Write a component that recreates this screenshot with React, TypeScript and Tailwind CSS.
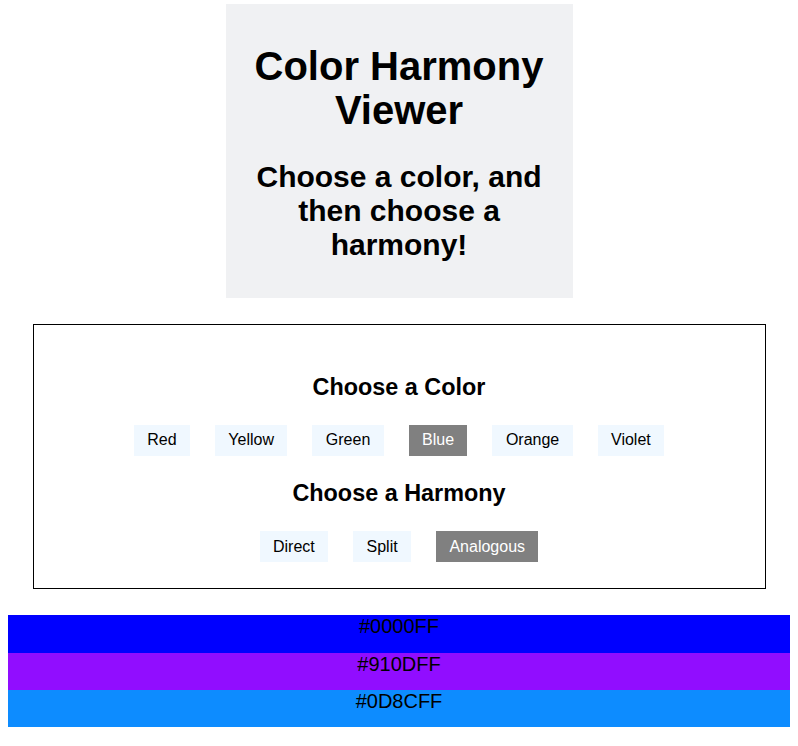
import { useState } from "react";

// ─── Constants ────────────────────────────────────────────────────────────────

const COLORS = ["Red", "Yellow", "Green", "Blue", "Orange", "Violet"];
const HARMONIES = ["Direct", "Split", "Analogous"];

const SWATCHES: Record<string, string[]> = {
    Analogous: ["#0000FF", "#910DFF", "#0D8CFF"],
};

// ─── Helpers ─────────────────────────────────────────────────────────────────

function ChoiceButton({ label, active, onClick }: { label: string; active: boolean; onClick: () => void }) {
    return (
        <button
            type="button"
            onClick={onClick}
            className={
                active
                    ? "px-[13.4px] py-[6.4px] text-base leading-[18.4px] bg-[#808080] text-white"
                    : "px-[13.4px] py-[6.4px] text-base leading-[18.4px] bg-[#f0f8ff] text-black"
            }
        >
            {label}
        </button>
    );
}

// ─── Component ────────────────────────────────────────────────────────────────

export default function App() {
    const [color, setColor] = useState("Blue");
    const [harmony, setHarmony] = useState("Analogous");
    const swatches = SWATCHES[harmony] ?? SWATCHES.Analogous;

    return (
        <div className="flex min-h-screen flex-col items-center bg-white font-['Liberation_Sans',Arial,sans-serif] text-black">
            {/* ── Header ── */}
            <header className="mt-[4px] flex h-[294px] w-[347px] flex-col items-center bg-[#f0f1f3] px-[20px] pt-[40px] text-center">
                <h1 className="text-[40px] font-bold leading-[44px]">Color Harmony Viewer</h1>
                <h2 className="mt-[28px] text-[30px] font-bold leading-[34px]">
                    Choose a color, and then choose a harmony!
                </h2>
            </header>

            {/* ── Picker panel ── */}
            <section className="mt-[26px] flex w-[733px] flex-col items-center border border-black pt-[48px] pb-[26px]">
                <h3 className="text-[23.4px] font-bold leading-[28px]">Choose a Color</h3>
                <div className="mt-[24px] flex gap-[25px]">
                    {COLORS.map((c) => (
                        <ChoiceButton key={c} label={c} active={c === color} onClick={() => setColor(c)} />
                    ))}
                </div>
                <h3 className="mt-[23px] text-[23.4px] font-bold leading-[28px]">Choose a Harmony</h3>
                <div className="mt-[24px] flex gap-[25px]">
                    {HARMONIES.map((h) => (
                        <ChoiceButton key={h} label={h} active={h === harmony} onClick={() => setHarmony(h)} />
                    ))}
                </div>
            </section>

            {/* ── Swatches ── */}
            <div className="mt-[26px] flex w-full flex-col px-[8px]">
                {swatches.map((hex) => (
                    <div
                        key={hex}
                        style={{ backgroundColor: hex }}
                        className="h-[5vh] text-center text-[20px] leading-[23px]"
                    >
                        {hex}
                    </div>
                ))}
            </div>
        </div>
    );
}
